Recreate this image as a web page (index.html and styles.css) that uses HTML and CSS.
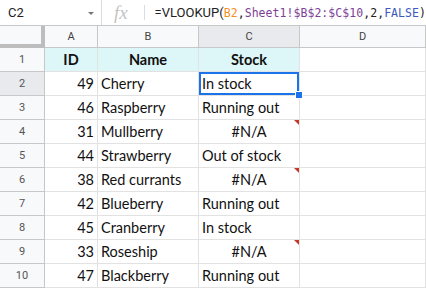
FILE: index.html
```html
<!DOCTYPE html>
<html lang="en">
<head>
  <meta charset="UTF-8" />
  <title>Sheet - VLOOKUP</title>
  <link rel="stylesheet" href="styles.css">
</head>
<body>

  <div class="formula-bar">
    <div class="name-box">
      <span>C2</span>
      <span class="caret"></span>
    </div>
    <div class="fx">fx</div>
    <div class="formula">
      <span class="f-plain">=VLOOKUP(</span><span class="f-mono"><span class="ref-b">B2</span>,<span class="ref-range">Sheet1!$B$2:$C$10</span>,2,<span class="ref-bool">FALSE</span>)</span>
    </div>
  </div>

  <div class="grid">
    <div class="corner"></div>
    <div class="col-head">A</div>
    <div class="col-head">B</div>
    <div class="col-head selected">C</div>
    <div class="col-head">D</div>

    <div class="row-head">1</div>
    <div class="cell title center">ID</div>
    <div class="cell title center">Name</div>
    <div class="cell title center">Stock</div>
    <div class="cell"></div>

    <div class="row-head selected">2</div>
    <div class="cell right">49</div>
    <div class="cell">Cherry</div>
    <div class="cell active">In stock<span class="handle"></span></div>
    <div class="cell"></div>

    <div class="row-head">3</div>
    <div class="cell right">46</div>
    <div class="cell">Raspberry</div>
    <div class="cell">Running out</div>
    <div class="cell"></div>

    <div class="row-head">4</div>
    <div class="cell right">31</div>
    <div class="cell">Mullberry</div>
    <div class="cell center error">#N/A</div>
    <div class="cell"></div>

    <div class="row-head">5</div>
    <div class="cell right">44</div>
    <div class="cell">Strawberry</div>
    <div class="cell">Out of stock</div>
    <div class="cell"></div>

    <div class="row-head">6</div>
    <div class="cell right">38</div>
    <div class="cell">Red currants</div>
    <div class="cell center error">#N/A</div>
    <div class="cell"></div>

    <div class="row-head">7</div>
    <div class="cell right">42</div>
    <div class="cell">Blueberry</div>
    <div class="cell">Running out</div>
    <div class="cell"></div>

    <div class="row-head">8</div>
    <div class="cell right">45</div>
    <div class="cell">Cranberry</div>
    <div class="cell">In stock</div>
    <div class="cell"></div>

    <div class="row-head">9</div>
    <div class="cell right">33</div>
    <div class="cell">Roseship</div>
    <div class="cell center error">#N/A</div>
    <div class="cell"></div>

    <div class="row-head">10</div>
    <div class="cell right">47</div>
    <div class="cell">Blackberry</div>
    <div class="cell">Running out</div>
    <div class="cell"></div>
  </div>

</body>
</html>
```

FILE: styles.css
```css
body {
  margin: 0;
  background: #ffffff;
  font-family: Roboto, Arial, sans-serif;
  color: #222;
  overflow: hidden;
}

/* formula bar */
.formula-bar {
  height: 25px;
  display: flex;
  align-items: center;
  border-bottom: 1px solid #c7c7c7;
  background: #fff;
}

.name-box {
  width: 94px;
  height: 25px;
  padding-left: 8px;
  display: flex;
  align-items: center;
  justify-content: space-between;
  border-right: 1px solid #dadce0;
  font-size: 13px;
  color: #222;
  box-sizing: content-box;
}

.caret {
  width: 0;
  height: 0;
  border-left: 3px solid transparent;
  border-right: 3px solid transparent;
  border-top: 3px solid #777;
  margin-right: 7px;
  margin-top: 2px;
}

.fx {
  width: 43px;
  height: 15px;
  line-height: 15px;
  padding-left: 12px;
  box-sizing: border-box;
  border-right: 1px solid #dadce0;
  font-family: "Liberation Serif", serif;
  font-style: italic;
  font-size: 19px;
  color: #c4c4c4;
}

.formula {
  padding-left: 10px;
  font-size: 12px;
  white-space: nowrap;
  color: #222;
}

.f-plain {
  font-family: Roboto, Arial, sans-serif;
  font-size: 13px;
}

.f-mono {
  font-family: "DejaVu Sans Mono", monospace;
  font-size: 11.5px;
  letter-spacing: 0.05px;
}

.ref-b { color: #f4911e; }
.ref-range { color: #7e3f98; }
.ref-bool { color: #3b5bbf; }

/* sheet grid */
.grid {
  display: grid;
  grid-template-columns: 45px 53px 101px 101px 1fr;
  grid-template-rows: 22px repeat(10, 24px);
}

.corner {
  background: #f8f9fa;
  border-right: 4px solid #bdbdbd;
  border-bottom: 4px solid #bdbdbd;
  box-sizing: border-box;
  height: 22px;
}

.col-head {
  background: #f8f9fa;
  border-right: 1px solid #c7c7c7;
  border-bottom: 1px solid #c7c7c7;
  display: flex;
  align-items: center;
  justify-content: center;
  font-size: 11px;
  color: #444;
}

.row-head {
  background: #f8f9fa;
  border-right: 1px solid #c7c7c7;
  border-bottom: 1px solid #c7c7c7;
  display: flex;
  align-items: center;
  justify-content: center;
  font-size: 11px;
  color: #555;
}

.col-head.selected,
.row-head.selected {
  background: #e8eaed;
}

.cell {
  position: relative;
  border-right: 1px solid #e2e2e2;
  border-bottom: 1px solid #e2e2e2;
  display: flex;
  align-items: center;
  padding: 0 3px;
  font-family: Lato, "Open Sans", sans-serif;
  font-size: 14.5px;
  color: #111;
  white-space: nowrap;
  overflow: visible;
}

.cell.right { justify-content: flex-end; }
.cell.center { justify-content: center; }

.cell.title {
  background: #ddf6f8;
  font-weight: bold;
}

.cell.error::after {
  content: "";
  position: absolute;
  top: 0;
  right: 0;
  border-top: 5px solid #c53929;
  border-left: 5px solid transparent;
}

.cell.active {
  box-shadow: inset 0 0 0 2px #1a73e8;
}

.handle {
  position: absolute;
  right: -4px;
  bottom: -4px;
  width: 6px;
  height: 6px;
  background: #1a73e8;
  border: 1px solid #fff;
  z-index: 2;
}
```
